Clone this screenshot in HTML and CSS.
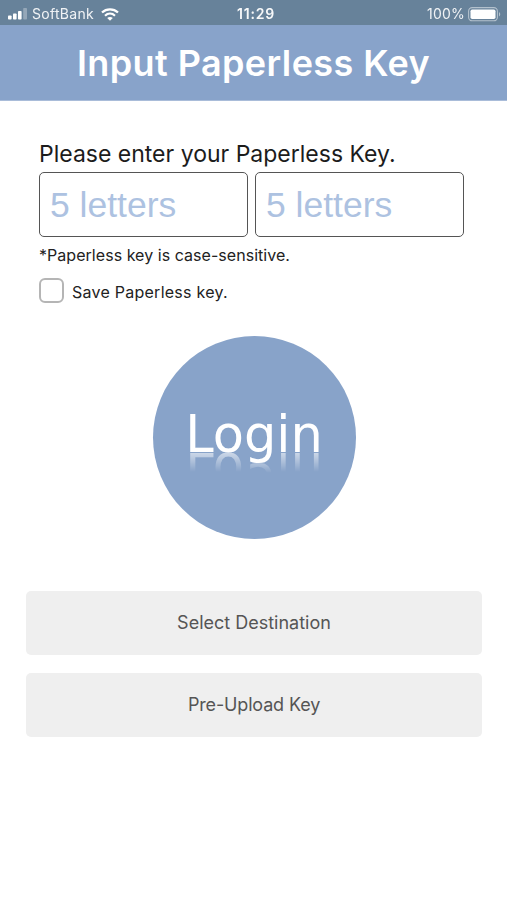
FILE: index.html
```html
<!DOCTYPE html>
<html lang="en">
<head>
<meta charset="utf-8">
<title>Input Paperless Key</title>
<link rel="stylesheet" href="styles.css">
</head>
<body>
<div class="status">
  <div class="status-left">
    <svg class="signal" width="20" height="12" viewBox="0 0 20 12" fill="#fff"><rect x="0" y="7.5" width="3.6" height="4" rx=".8"/><rect x="5" y="5.5" width="3.6" height="6" rx=".8"/><rect x="10" y="3" width="3.6" height="8.5" rx=".8"/><rect x="15.2" y="0" width="3.8" height="11.5" rx=".8" opacity=".3"/></svg>
    <span class="carrier">SoftBank</span>
    <svg class="wifi" width="18" height="13" viewBox="0 0 18 13" fill="none" stroke="#fff"><path d="M1 4.5C5.5.3 12.500.3 17 4.500" stroke-width="2.300"/><path d="M4 7.700c2.900-2.700 7.100-2.700 10 0" stroke-width="2.200"/><path d="M9 12.800 6.200 10c1.500-1.500 4.100-1.500 5.600 0z" fill="#fff" stroke="none"/></svg>
  </div>
  <span class="time">11:29</span>
  <div class="status-right">
    <span class="percent">100%</span>
    <svg class="battery" width="33" height="15" viewBox="0 0 33 15"><rect x=".6" y=".6" width="28.800" height="13.200" rx="3.600" fill="none" stroke="#fff" stroke-opacity=".5" stroke-width="1.100"/><rect x="2.500" y="2.500" width="25" height="9.400" rx="1.700" fill="#fff"/><path d="M31 5c1.700.8 1.700 3.600 0 4.400z" fill="#fff" opacity=".5"/></svg>
  </div>
</div>
<header class="header"><h1 class="title">Input Paperless Key</h1></header>
<main>
  <form class="form">
    <div class="prompt">Please enter your Paperless Key.</div>
    <div class="keys">
      <input class="key" type="text" placeholder="5 letters" aria-label="Key, first part">
      <input class="key" type="text" placeholder="5 letters" aria-label="Key, second part">
    </div>
    <div class="note">*Paperless key is case-sensitive.</div>
    <label class="save"><input class="check" type="checkbox"><span class="save-text">Save Paperless key.</span></label>
  </form>
  <button class="login" type="button"><span class="word"><span class="glyphs">Lo</span><span class="glyphs low">g</span><span class="glyphs">in</span></span></button>
  <div class="actions">
    <button class="action destination" type="button">Select Destination</button>
    <button class="action upload" type="button">Pre-Upload Key</button>
  </div>
</main>
</body>
</html>
```
FILE: styles.css
```css
* { box-sizing: border-box; }
body { margin: 0; background: #fff; font-family: Inter, "Liberation Sans", sans-serif; color: #222; white-space: nowrap; }
.status { height: 25px; display: grid; grid-template-columns: 1fr auto 1fr; align-items: center; padding: 3px 6px 0 8px; background: #67829a; color: #fff; font-size: 14px; line-height: 20px; }
.status-left, .status-right { display: flex; align-items: center; }
.status-right { justify-content: flex-end; }
.carrier { margin-left: 4px; letter-spacing: 0.3px; opacity: .9; }
.wifi { margin-left: 7px; }
.time { font-weight: 600; letter-spacing: 0.8px; opacity: .95; padding-left: 3px; }
.percent { opacity: .9; letter-spacing: 0.2px; margin-right: 3px; }
.header { height: 76px; display: flex; align-items: center; justify-content: center; background: #88a3ca; border-bottom: 1px solid #a9bcd9; }
.title { margin: 0; color: #fff; font-size: 36px; font-weight: 600; line-height: 44px; letter-spacing: 0.4px; }
.form { padding: 39px 39px 0; }
.prompt { font-size: 23px; line-height: 28px; height: 32px; color: #1c1c1c; }
.keys { display: flex; gap: 7px; }
.key { width: 209px; height: 65px; padding: 2px 10px 0; border: 1.500px solid #555; border-radius: 5px; background: #fff; font: 35.500px "Liberation Sans", sans-serif; outline: none; }
.key::placeholder { color: #adc2e1; opacity: 1; }
.note { margin-top: 7px; font-size: 16px; line-height: 22px; letter-spacing: 0.04px; }
.save { display: flex; align-items: center; margin-top: 11px; height: 26px; }
.check { appearance: none; width: 25px; height: 25px; margin: 0 8px 0 0; border: 2px solid #b5b5b5; border-radius: 6px; background: #fff; }
.save-text { font-size: 16px; line-height: 20px; padding-top: 3px; letter-spacing: 0.25px; }
.login { display: flex; justify-content: center; width: 203px; height: 203px; margin: 33px auto 0; padding: 81px 0 0; border: 0; border-radius: 50%; background: #88a3c9; color: #fff; font: 51px/36px "DejaVu Sans", sans-serif; position: relative; left: 0.500px; }
.word { display: block; height: 48px; }
.glyphs { display: inline-block; line-height: 36px; -webkit-box-reflect: below -1px linear-gradient(to top, rgba(255,255,255,.6), transparent 20px); }
.low { padding-bottom: 10px; -webkit-box-reflect: below 0 linear-gradient(to top, rgba(255,255,255,.35), transparent 10px); }
.actions { display: grid; gap: 18px; margin: 52px 25px 0 26px; }
.action { height: 64px; padding: 0 0 2px; border: 0; border-radius: 5px; background: #efefef; color: #555; font: 18px Inter, sans-serif; }
.upload { letter-spacing: -0.15px; }
```
